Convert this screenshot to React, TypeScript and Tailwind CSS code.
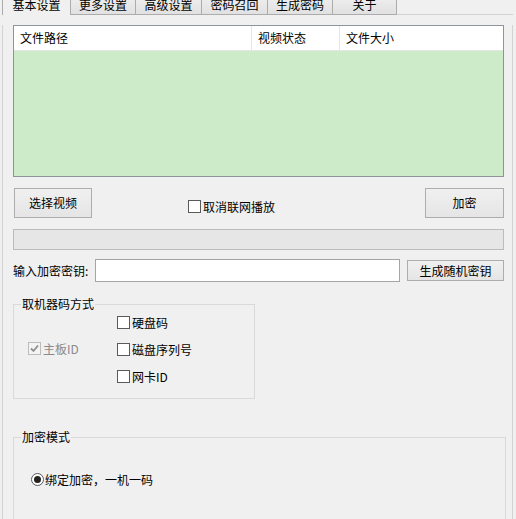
import React from 'react';

const tabs = ['基本设置', '更多设置', '高级设置', '密码召回', '生成密码', '关于'];
const tabWidths = ['w-[69px]', 'w-[65px]', 'w-[66px]', 'w-[66px]', 'w-[65px]', 'w-[64px]'];

function CheckBox({ label, disabled, checked }: { label: string; disabled?: boolean; checked?: boolean }) {
  return (
    <label className={`flex items-center h-[13px] gap-[2px] ${disabled ? 'text-[#8a8a8a]' : 'text-black'}`}>
      <span
        className={`w-[13px] h-[13px] flex items-center justify-center border ${
          disabled ? 'border-[#bcbcbc] bg-[#f4f4f4]' : 'border-[#5a5a5a] bg-white'
        }`}
      >
        {checked && (
          <svg width="9" height="9" viewBox="0 0 9 9">
            <path d="M1 4.5 L3.5 7 L8 1.5" fill="none" stroke={disabled ? '#8f8f8f' : '#222'} strokeWidth="1.8" />
          </svg>
        )}
      </span>
      <span className="leading-[13px]">{label}</span>
    </label>
  );
}

function Button({ label, className }: { label: string; className: string }) {
  return (
    <button className={`border border-[#adadad] bg-linear-to-b from-[#f0f0f0] to-[#e5e5e5] text-black flex items-center justify-center ${className}`}>
      {label}
    </button>
  );
}

export default function App() {
  return (
    <div className="w-[516px] h-[519px] overflow-hidden bg-[#f0f0f0] text-[12px] text-black font-['Noto_Sans_CJK_SC','Noto_Sans',sans-serif] select-none">
      {/* tab strip (top of the tabs is scrolled off) */}
      <div className="flex h-[15px] pl-[2px]">
        {tabs.map((t, i) => (
          <div
            key={t}
            className={`${tabWidths[i]} flex-none flex justify-center overflow-hidden border-r border-[#acacac] ${
              i === 0
                ? 'border-l bg-[#f0f0f0]'
                : 'border-b bg-linear-to-b from-[#ececec] to-[#e1e1e1]'
            }`}
          >
            <span className="leading-[12px] -mt-[1px]">{t}</span>
          </div>
        ))}
        <div className="flex-1 mr-[3px] border-b border-[#d2d2d2]" />
      </div>

      {/* tab page */}
      <div className="ml-[2px] w-[511px] h-[504px] border-x border-[#d2d2d2] pl-[10px]">
        {/* list view */}
        <div className="mt-[10px] w-[491px] h-[152px] border border-[#8f949c] bg-[#cdebc8] flex flex-col">
          <div className="h-[25px] bg-white border-b border-[#e5e5e5] flex items-center">
            <div className="w-[238px] h-full pl-[6px] border-r border-[#e5e5e5] flex items-center">文件路径</div>
            <div className="w-[88px] h-full pl-[6px] border-r border-[#e5e5e5] flex items-center">视频状态</div>
            <div className="flex-1 h-full pl-[6px] flex items-center">文件大小</div>
          </div>
        </div>

        {/* buttons row */}
        <div className="mt-[11px] w-[491px] h-[30px] flex">
          <Button label="选择视频" className="ml-[1px] w-[78px] h-[30px]" />
          <div className="ml-[96px] mt-[12px]">
            <CheckBox label="取消联网播放" />
          </div>
          <Button label="加密" className="ml-auto w-[79px] h-[30px]" />
        </div>

        {/* progress */}
        <div className="mt-[11px] w-[491px] h-[21px] border border-[#bcbcbc] bg-[#e6e6e6]" />

        {/* key row */}
        <div className="mt-[9px] w-[491px] h-[23px] flex items-center">
          <span className="w-[82px] flex-none">输入加密密钥:</span>
          <div className="w-[305px] h-[23px] flex-none border border-[#a5a5a5] bg-white" />
          <Button label="生成随机密钥" className="ml-[7px] w-[97px] h-[21px]" />
        </div>

        {/* machine code group */}
        <div className="relative mt-[22px] w-[242px] h-[95px] border border-[#d9d9d9] flex pl-[14px]">
          <span className="absolute left-[7px] -top-[8px] px-[1px] leading-[14px] bg-[#f0f0f0]">取机器码方式</span>
          <div className="w-[89px] pt-[37px]">
            <CheckBox label="主板ID" disabled checked />
          </div>
          <div className="pt-[11px] flex flex-col gap-[14px]">
            <CheckBox label="硬盘码" />
            <CheckBox label="磁盘序列号" />
            <CheckBox label="网卡ID" />
          </div>
        </div>

        {/* encrypt mode group */}
        <div className="relative mt-[38px] w-[493px] h-[100px] border border-[#d9d9d9] pl-[17px] pt-[35px]">
          <span className="absolute left-[7px] -top-[8px] px-[1px] leading-[14px] bg-[#f0f0f0]">加密模式</span>
          <label className="flex items-center gap-[1px] h-[13px]">
            <span className="w-[13px] h-[13px] rounded-full border border-[#5a5a5a] bg-white flex items-center justify-center">
              <span className="w-[7px] h-[7px] rounded-full bg-[#222]" />
            </span>
            <span className="leading-[13px]">绑定加密，一机一码</span>
          </label>
        </div>
      </div>
    </div>
  );
}
